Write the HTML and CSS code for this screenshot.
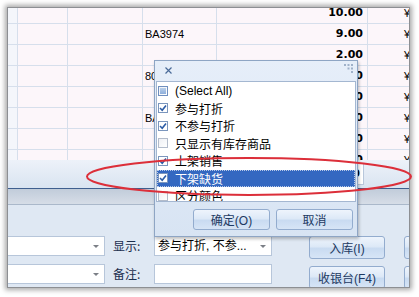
FILE: index.html
```html
<!DOCTYPE html>
<html lang="zh-CN">
<head>
<meta charset="UTF-8">
<title>商品列表筛选</title>
<link rel="stylesheet" href="styles.css">
</head>
<body>
<div class="window">
  <div class="grid">
    <div class="row first">
      <div class="cell c1"></div><div class="cell c2"></div><div class="cell c3"></div><div class="cell c4"></div><div class="cell c5 num">10.00</div><div class="cell c6">¥</div>
    </div>
    <div class="row">
      <div class="cell c1"></div><div class="cell c2"></div><div class="cell c3"></div><div class="cell c4">BA3974</div><div class="cell c5 num">9.00</div><div class="cell c6">¥</div>
    </div>
    <div class="row">
      <div class="cell c1"></div><div class="cell c2"></div><div class="cell c3"></div><div class="cell c4"></div><div class="cell c5 num">2.00</div><div class="cell c6">¥</div>
    </div>
    <div class="row">
      <div class="cell c1"></div><div class="cell c2"></div><div class="cell c3"></div><div class="cell c4">8010023</div><div class="cell c5 num">5.00</div><div class="cell c6">¥</div>
    </div>
    <div class="row">
      <div class="cell c1"></div><div class="cell c2"></div><div class="cell c3"></div><div class="cell c4"></div><div class="cell c5 num">8.00</div><div class="cell c6">¥</div>
    </div>
    <div class="row">
      <div class="cell c1"></div><div class="cell c2"></div><div class="cell c3"></div><div class="cell c4">BA3980</div><div class="cell c5 num">6.00</div><div class="cell c6">¥</div>
    </div>
    <div class="row">
      <div class="cell c1"></div><div class="cell c2"></div><div class="cell c3"></div><div class="cell c4"></div><div class="cell c5 num">4.00</div><div class="cell c6">¥</div>
    </div>
    <div class="row">
      <div class="cell c1"></div><div class="cell c2"></div><div class="cell c3"></div><div class="cell c4"></div><div class="cell c5 num">3.00</div><div class="cell c6">¥</div>
    </div>
  </div>

  <div class="summary">
    <div class="sum-cell">120.00</div>
  </div>
  <div class="splitter"></div>

  <div class="form">
    <div class="col combos">
      <div class="combo"><span class="arrow"></span></div>
      <div class="combo"><span class="arrow"></span></div>
    </div>
    <div class="col labels">
      <div class="label">显示:</div>
      <div class="label">备注:</div>
    </div>
    <div class="col fields">
      <div class="combo wide"><span class="value">参与打折, 不参...</span><span class="arrow"></span></div>
      <div class="input"></div>
    </div>
    <div class="col actions">
      <button class="btn">入库(I)</button>
      <button class="btn">收银台(F4)</button>
    </div>
    <div class="col actions more">
      <button class="btn"></button>
      <button class="btn"></button>
    </div>
  </div>
</div>

<div class="popup">
  <div class="popup-head">
    <svg class="close" width="7" height="7" viewBox="0 0 7 7"><path d="M0.5 0.5L6.5 6.5M6.5 0.5L0.5 6.5" stroke="#4a6a98" stroke-width="1.2"/></svg>
    <svg class="grip" width="9" height="9" viewBox="0 0 9 9">
      <rect x="0" y="0" width="2" height="2" fill="#9fb1c9"/><rect x="3.5" y="0" width="2" height="2" fill="#9fb1c9"/><rect x="7" y="0" width="2" height="2" fill="#9fb1c9"/>
      <rect x="3.5" y="3.5" width="2" height="2" fill="#9fb1c9"/><rect x="7" y="3.5" width="2" height="2" fill="#9fb1c9"/>
      <rect x="7" y="7" width="2" height="2" fill="#9fb1c9"/>
    </svg>
  </div>
  <div class="list">
    <div class="item"><span class="cb part"><span></span></span>(Select All)</div>
    <div class="item"><span class="cb on"><svg width="8" height="8" viewBox="0 0 8 8"><path d="M1 4L3.2 6.2L7 1.5" fill="none" stroke="#2d5da6" stroke-width="1.6"/></svg></span>参与打折</div>
    <div class="item"><span class="cb on"><svg width="8" height="8" viewBox="0 0 8 8"><path d="M1 4L3.2 6.2L7 1.5" fill="none" stroke="#2d5da6" stroke-width="1.6"/></svg></span>不参与打折</div>
    <div class="item"><span class="cb"></span>只显示有库存商品</div>
    <div class="item"><span class="cb on"><svg width="8" height="8" viewBox="0 0 8 8"><path d="M1 4L3.2 6.2L7 1.5" fill="none" stroke="#2d5da6" stroke-width="1.6"/></svg></span>上架销售</div>
    <div class="item selected"><span class="cb on"><svg width="8" height="8" viewBox="0 0 8 8"><path d="M1 4L3.2 6.2L7 1.5" fill="none" stroke="#2d5da6" stroke-width="1.6"/></svg></span>下架缺货</div>
    <div class="item"><span class="cb"></span>区分颜色</div>
  </div>
  <div class="popup-foot">
    <button class="btn">确定(O)</button>
    <button class="btn">取消</button>
  </div>
</div>

<svg class="mark" width="419" height="297" viewBox="0 0 419 297">
  <ellipse cx="249" cy="176.5" rx="162" ry="18.5" fill="none" stroke="#dc2f3a" stroke-width="2"/>
</svg>
</body>
</html>
```

FILE: styles.css
```css
body {
  margin: 0;
  width: 419px;
  height: 297px;
  position: relative;
  overflow: hidden;
  background-color: #ffffff;
  font-family: "Liberation Sans", "Noto Sans CJK SC", sans-serif;
  font-size: 12px;
  color: #000;
}

.window {
  margin: 7px 0 0 7px;
  width: 403px;
  height: 281px;
  box-sizing: border-box;
  border: 1px solid #8d8f93;
  box-shadow: 0 0 5px 2px rgba(0, 0, 0, 0.35);
  overflow: hidden;
  display: flex;
  flex-direction: column;
  background-color: #dfe8f3;
}

/* grid */
.grid {
  height: 152px;
  flex: none;
  overflow: hidden;
  background-color: #fff;
}
.row {
  display: flex;
  height: 21px;
  box-sizing: border-box;
  border-bottom: 1px solid #d6dfec;
  background-color: #fcf6fa;
}
.row.first {
  margin-top: -5px;
}
.cell {
  flex: none;
  box-sizing: border-box;
  border-right: 1px solid #d6dfec;
  line-height: 20px;
  white-space: nowrap;
  overflow: hidden;
  font-size: 11px;
}
.c1 { width: 10px; background-color: #f4f6fb; }
.c2 { width: 50px; }
.c3 { width: 75px; }
.c4 { width: 74px; padding-left: 2px; }
.c5 { width: 151px; }
.c6 {
  flex: 1;
  border-right: none;
  padding-left: 36px;
}
.num {
  text-align: right;
  padding-right: 4px;
  font-family: "DejaVu Sans", sans-serif;
  font-weight: bold;
  font-size: 11px;
}

.summary {
  height: 28px;
  flex: none;
  background: linear-gradient(#edf2f9, #d9e4f1);
  display: flex;
  align-items: center;
  padding-left: 209px;
}
.sum-cell {
  width: 147px;
  height: 22px;
  box-sizing: border-box;
  background-color: #fff;
  border: 1px solid #b8c7db;
  text-align: right;
  padding-right: 3px;
  line-height: 20px;
  font-family: "DejaVu Sans", sans-serif;
  font-weight: bold;
  font-size: 11px;
}

.splitter {
  height: 17px;
  flex: none;
  box-sizing: border-box;
  border-top: 1px solid #3f5f8f;
  border-bottom: 1px solid #aab8ca;
  background: linear-gradient(#c1ccda, #d6dde7);
}

/* bottom form */
.form {
  flex: 1;
  display: flex;
  padding-top: 31px;
  color: #1b2e4d;
}
.col {
  flex: none;
  display: flex;
  flex-direction: column;
  gap: 8px;
}
.combos {
  margin-left: -2px;
}
.combo,
.input {
  position: relative;
  height: 20px;
  box-sizing: border-box;
  background-color: #fff;
  border: 1px solid #b7c6da;
}
.combos .combo {
  width: 99px;
}
.combo .arrow {
  position: absolute;
  right: 5px;
  top: 8px;
  border-left: 3px solid transparent;
  border-right: 3px solid transparent;
  border-top: 3px solid #7b7f86;
}
.labels {
  width: 41px;
  margin-left: 8px;
}
.label {
  height: 20px;
  line-height: 20px;
  white-space: nowrap;
  font-family: "Noto Sans CJK SC", sans-serif;
}
.fields .combo,
.fields .input {
  width: 118px;
}
.combo .value {
  display: block;
  padding-left: 3px;
  line-height: 18px;
  color: #000;
  white-space: nowrap;
}
.actions {
  margin-left: 37px;
  gap: 7px;
}
.actions.more {
  margin-left: 19px;
}
.btn {
  width: 76px;
  height: 23px;
  box-sizing: border-box;
  border: 1px solid #93acce;
  border-radius: 3px;
  background: linear-gradient(#eef4fc 0%, #dde9f7 45%, #c9dbf1 55%, #d7e5f6 100%);
  font-family: "Liberation Sans", "Noto Sans CJK SC", sans-serif;
  font-size: 12px;
  color: #1e3a62;
  padding: 0;
}
.more .btn {
  width: 40px;
}

/* filter popup */
.popup {
  position: absolute;
  left: 154px;
  top: 60px;
  width: 204px;
  height: 177px;
  box-sizing: border-box;
  border: 1px solid #8ea5c4;
  background: linear-gradient(#e6eef9, #d8e4f3);
  box-shadow: 1px 2px 3px rgba(0, 0, 0, 0.25);
  display: flex;
  flex-direction: column;
}
.popup-head {
  height: 20px;
  display: flex;
  justify-content: space-between;
  align-items: flex-start;
  padding: 6px 4px 0 10px;
  box-sizing: border-box;
}
.grip {
  margin-top: -3px;
}
.list {
  margin: 0 1px;
  height: 121px;
  box-sizing: border-box;
  border: 1px solid #a4b7d1;
  background-color: #fff;
  overflow: hidden;
  font-family: "Liberation Sans", "Noto Sans CJK SC", sans-serif;
}
.item {
  height: 17.5px;
  display: flex;
  align-items: center;
  gap: 7px;
  padding-left: 1px;
  white-space: nowrap;
}
.item.selected {
  background-color: #3468c1;
  color: #fff;
  outline: 1px dotted #b8c9e8;
  outline-offset: -1px;
}
.cb {
  width: 10px;
  height: 10px;
  box-sizing: border-box;
  border: 1px solid #b3bccb;
  background: linear-gradient(135deg, #eef0f4, #ffffff);
  display: flex;
  align-items: center;
  justify-content: center;
}
.cb.on {
  border-color: #7b96bd;
  background: #fff;
}
.cb.part {
  border-color: #6f8fbf;
}
.cb.part span {
  width: 6px;
  height: 6px;
  background: linear-gradient(#b9cfea, #8eaedb);
}
.popup-foot {
  display: flex;
  justify-content: flex-end;
  gap: 6px;
  padding: 7px 4px 0 0;
}
.popup-foot .btn {
  width: 77px;
  height: 21px;
}

.mark {
  position: absolute;
  left: 0;
  top: 0;
  pointer-events: none;
}
```
